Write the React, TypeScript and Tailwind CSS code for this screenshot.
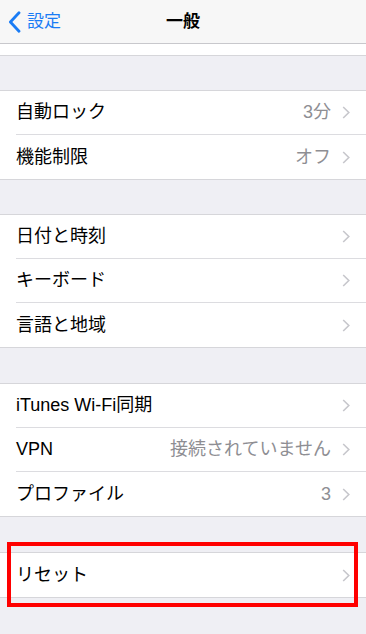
const font = { fontFamily: '"Liberation Sans", "Noto Sans CJK JP", sans-serif' };

type Row = { label: string; value?: string };

function Chevron() {
	return (
		<svg width="8" height="13" viewBox="0 0 8 13" className="shrink-0">
			<path d="M1.2 1 L6.8 6.5 L1.2 12" fill="none" stroke="#c7c7cc" strokeWidth="1.6" />
		</svg>
	);
}

function BackChevron() {
	return (
		<svg width="13" height="22" viewBox="0 0 13 22" className="shrink-0">
			<path
				d="M11 1.8 L2.4 11 L11 20.2"
				fill="none"
				stroke="#1a7cf5"
				strokeWidth="2.8"
				strokeLinecap="round"
				strokeLinejoin="round"
			/>
		</svg>
	);
}

function Group({ rows }: { rows: Row[] }) {
	return (
		<div className="border-y border-[#d6d6da] bg-white">
			{rows.map((r, i) => (
				<div key={r.label} className="pl-4">
					<div
						className={
							"flex h-[44px] items-center pr-4 " +
							(i < rows.length - 1 ? "border-b border-[#dcdce0]" : "")
						}
					>
						<span className="flex-1 text-[18px] text-black">{r.label}</span>
						{r.value && (
							<span className="mr-[11px] text-[18px] text-[#8e8e93]">{r.value}</span>
						)}
						<Chevron />
					</div>
				</div>
			))}
		</div>
	);
}

export default function App() {
	return (
		<div className="relative h-[634px] w-[366px] overflow-hidden bg-[#efeff4]" style={font}>
			<div className="flex h-[44px] items-center border-b border-[#c8c8cc] bg-[#f7f7f7]">
				<div className="flex w-[120px] items-center gap-[6px] pl-[8px] text-[#1a7cf5]">
					<BackChevron />
					<span className="text-[17px]">設定</span>
				</div>
				<div className="flex-1 text-center text-[17px] font-bold text-black">一般</div>
				<div className="w-[120px]" />
			</div>
			<div className="h-[12px] border-b border-[#d6d6da] bg-white" />
			<div className="h-[34px]" />
			<Group
				rows={[
					{ label: "自動ロック", value: "3分" },
					{ label: "機能制限", value: "オフ" },
				]}
			/>
			<div className="h-[34px]" />
			<Group
				rows={[{ label: "日付と時刻" }, { label: "キーボード" }, { label: "言語と地域" }]}
			/>
			<div className="h-[35px]" />
			<Group
				rows={[
					{ label: "iTunes Wi-Fi同期" },
					{ label: "VPN", value: "接続されていません" },
					{ label: "プロファイル", value: "3" },
				]}
			/>
			<div className="h-[35px]" />
			<Group rows={[{ label: "リセット" }]} />
			<div className="pointer-events-none absolute left-[7px] top-[542px] h-[65px] w-[351px] border-[4px] border-[#ff0000]" />
		</div>
	);
}
